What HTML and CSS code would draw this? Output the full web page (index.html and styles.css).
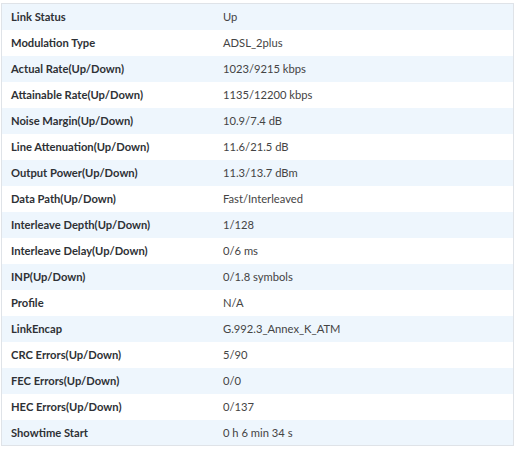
FILE: index.html
```html
<!DOCTYPE html>
<html>
<head>
<meta charset="utf-8">
<link rel="stylesheet" href="styles.css">
</head>
<body>
<div class="wrap">
<table class="info">
<tbody>
<tr><th>Link Status</th><td>Up</td></tr>
<tr><th>Modulation Type</th><td>ADSL_2plus</td></tr>
<tr><th>Actual Rate(Up/Down)</th><td>1023/9215 kbps</td></tr>
<tr><th>Attainable Rate(Up/Down)</th><td>1135/12200 kbps</td></tr>
<tr><th>Noise Margin(Up/Down)</th><td>10.9/7.4 dB</td></tr>
<tr><th>Line Attenuation(Up/Down)</th><td>11.6/21.5 dB</td></tr>
<tr><th>Output Power(Up/Down)</th><td>11.3/13.7 dBm</td></tr>
<tr><th>Data Path(Up/Down)</th><td>Fast/Interleaved</td></tr>
<tr><th>Interleave Depth(Up/Down)</th><td>1/128</td></tr>
<tr><th>Interleave Delay(Up/Down)</th><td>0/6 ms</td></tr>
<tr><th>INP(Up/Down)</th><td>0/1.8 symbols</td></tr>
<tr><th>Profile</th><td>N/A</td></tr>
<tr><th>LinkEncap</th><td>G.992.3_Annex_K_ATM</td></tr>
<tr><th>CRC Errors(Up/Down)</th><td>5/90</td></tr>
<tr><th>FEC Errors(Up/Down)</th><td>0/0</td></tr>
<tr><th>HEC Errors(Up/Down)</th><td>0/137</td></tr>
<tr><th>Showtime Start</th><td>0 h 6 min 34 s</td></tr>
</tbody>
</table>
</div>
</body>
</html>
```

FILE: styles.css
```css
html, body {
  margin: 0;
  padding: 0;
  background: #ffffff;
}
.wrap {
  padding: 3px 2px 0 1px;
}
.info {
  width: 513px;
  border-collapse: collapse;
  border: 1px solid #dfe3e8;
  font-family: "Lato", "Open Sans", sans-serif;
  font-size: 11.2px;
  color: #333;
}
.info tr {
  height: 26px;
}
.info tr:nth-child(odd) {
  background: #eef6fd;
}
.info tr:nth-child(even) {
  background: #ffffff;
}
.info th {
  width: 212px;
  text-align: left;
  font-weight: 700;
  padding: 0 0 0 9px;
  color: #2e3135;
}
.info td {
  padding: 0;
  color: #444;
}
```
